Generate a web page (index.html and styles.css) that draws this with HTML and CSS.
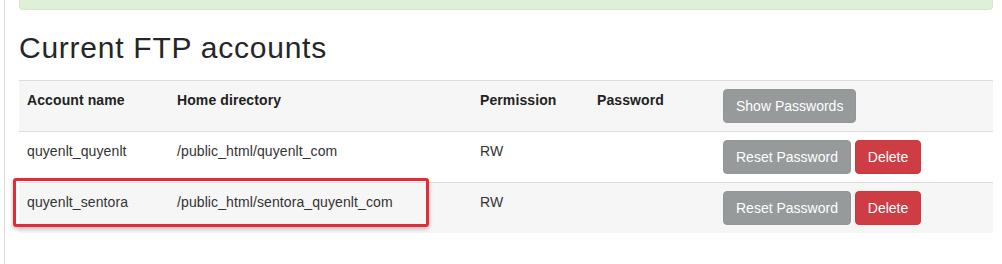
FILE: index.html
```html
<!DOCTYPE html>
<html lang="en">
<head>
<meta charset="utf-8">
<title>Current FTP accounts</title>
<link rel="stylesheet" href="styles.css">
</head>
<body>
<div class="page">
  <div class="alert"></div>
  <h2 class="title">Current FTP accounts</h2>
  <div class="table-wrap">
    <table class="ftp-table">
      <colgroup>
        <col class="c-name"><col class="c-dir"><col class="c-perm"><col class="c-pass"><col class="c-act">
      </colgroup>
      <tr class="head">
        <th>Account name</th>
        <th>Home directory</th>
        <th>Permission</th>
        <th>Password</th>
        <th class="actions"><button class="btn btn-gray">Show Passwords</button></th>
      </tr>
      <tr>
        <td>quyenlt_quyenlt</td>
        <td>/public_html/quyenlt_com</td>
        <td>RW</td>
        <td></td>
        <td class="actions"><button class="btn btn-gray">Reset Password</button> <button class="btn btn-red">Delete</button></td>
      </tr>
      <tr class="striped">
        <td>quyenlt_sentora</td>
        <td>/public_html/sentora_quyenlt_com</td>
        <td>RW</td>
        <td></td>
        <td class="actions"><button class="btn btn-gray">Reset Password</button> <button class="btn btn-red">Delete</button></td>
      </tr>
    </table>
    <div class="highlight"></div>
  </div>
</div>
</body>
</html>
```
FILE: styles.css
```css
html, body {
  margin: 0;
  padding: 0;
  background: #fff;
}
body {
  font-family: "Liberation Sans", Arial, sans-serif;
  font-size: 14px;
  line-height: 20px;
  color: #333;
}
.page {
  margin-left: 4px;
  border-left: 1px solid #dcdcdc;
  min-height: 264px;
  padding: 0 9px 0 14px;
  box-sizing: border-box;
}
.alert {
  height: 9px;
  background: #dff0d8;
  border: 1px solid #d6e9c6;
  border-top: none;
  border-radius: 0 0 4px 4px;
}
.title {
  margin: 21px 0 16px;
  font-size: 30px;
  line-height: 33px;
  font-weight: 400;
  letter-spacing: 0.75px;
  color: #262626;
}
.table-wrap {
  position: relative;
}
.ftp-table {
  width: 974px;
  border-collapse: collapse;
  table-layout: fixed;
}
.c-name { width: 150px; }
.c-dir { width: 303px; }
.c-perm { width: 117px; }
.c-pass { width: 126px; }
.c-act { width: 278px; }
.ftp-table th,
.ftp-table td {
  padding: 9px 8px 7px;
  text-align: left;
  vertical-align: top;
  border-top: 1px solid #dddddd;
  white-space: nowrap;
  letter-spacing: 0.1px;
}
.ftp-table th.actions,
.ftp-table td.actions {
  padding: 8px;
  letter-spacing: 0;
}
.ftp-table th {
  font-weight: 700;
  color: #222;
}
.ftp-table tr.head,
.ftp-table tr.striped {
  background: #f6f6f6;
}
.btn {
  display: inline-block;
  font-family: inherit;
  font-size: 14px;
  line-height: 20px;
  padding: 6px 12px;
  border-radius: 4px;
  color: #fff;
  cursor: pointer;
}
.btn-gray {
  background: #969a9b;
  border: 1px solid #929697;
}
.btn-red {
  background: #cd3d43;
  border: 1px solid #c9393f;
}
.highlight {
  position: absolute;
  left: -6px;
  top: 98px;
  width: 416px;
  height: 49px;
  box-sizing: border-box;
  border: 3px solid #e22c3a;
  border-radius: 3px;
  box-shadow: 0 2px 4px rgba(0, 0, 0, 0.25);
}
```
